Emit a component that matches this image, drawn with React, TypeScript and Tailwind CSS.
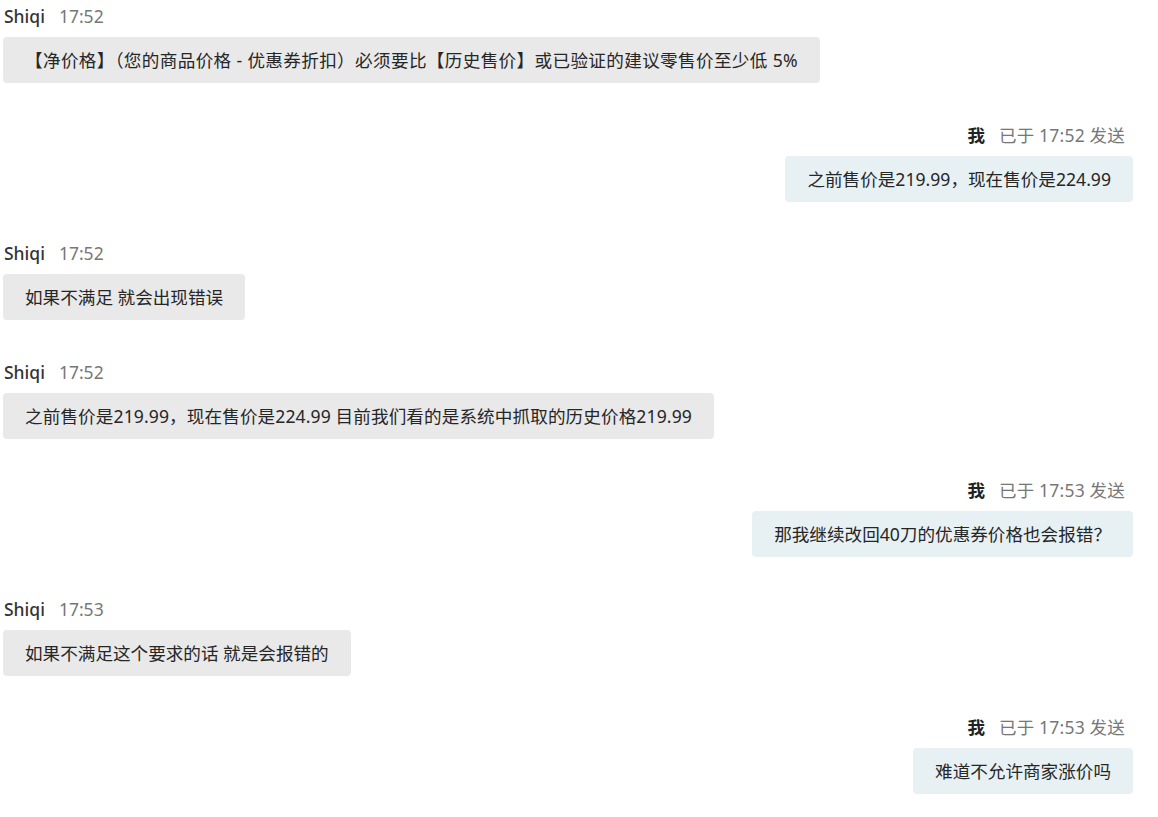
import React from "react";

type Msg = { me: boolean; time: string; text: string; extra?: string };

const msgs: Msg[] = [
  {
    me: false,
    time: "17:52",
    text: "【净价格】（您的商品价格 - 优惠券折扣）必须要比【历史售价】或已验证的建议零售价至少低 5%",
    extra: "tracking-[0.35px]",
  },
  { me: true, time: "17:52", text: "之前售价是219.99，现在售价是224.99" },
  { me: false, time: "17:52", text: "如果不满足 就会出现错误" },
  {
    me: false,
    time: "17:52",
    text: "之前售价是219.99，现在售价是224.99 目前我们看的是系统中抓取的历史价格219.99",
    extra: "tracking-[0.1px]",
  },
  { me: true, time: "17:53", text: "那我继续改回40刀的优惠券价格也会报错？" },
  { me: false, time: "17:53", text: "如果不满足这个要求的话 就是会报错的" },
  { me: true, time: "17:53", text: "难道不允许商家涨价吗" },
];

export default function App() {
  return (
    <div
      className="w-[1158px] h-[817px] bg-white overflow-hidden pt-[5px] pl-[3px] pr-[25px]"
      style={{ fontFamily: '"Noto Sans", "Noto Sans CJK SC", sans-serif' }}
    >
      <div className="flex flex-col gap-[40.5px]">
        {msgs.map((m, i) => (
          <div key={i} className={m.me ? "flex flex-col items-end" : "flex flex-col items-start"}>
            {m.me ? (
              <div className="flex items-center h-[22px] leading-[22px] text-[17.5px] pr-[8px]">
                <span className="font-bold text-[#222]">我</span>
                <span className="ml-[14px] text-[#777] tracking-[0.2px]">已于 {m.time} 发送</span>
              </div>
            ) : (
              <div className="flex items-center h-[22px] leading-[22px] text-[17.5px] pl-[1px]">
                <span className="text-[#333] font-medium">Shiqi</span>
                <span className="ml-[14px] text-[#777]">{m.time}</span>
              </div>
            )}
            <div
              className={
                "mt-[10px] h-[46px] rounded-[4px] px-[22px] py-[11px] text-[17.6px] leading-[24px] text-[#262626] " +
                (m.me ? "bg-[#e7f1f4] " : "bg-[#e9e9e9] ") +
                (m.extra ?? "")
              }
            >
              {m.text}
            </div>
          </div>
        ))}
      </div>
    </div>
  );
}
